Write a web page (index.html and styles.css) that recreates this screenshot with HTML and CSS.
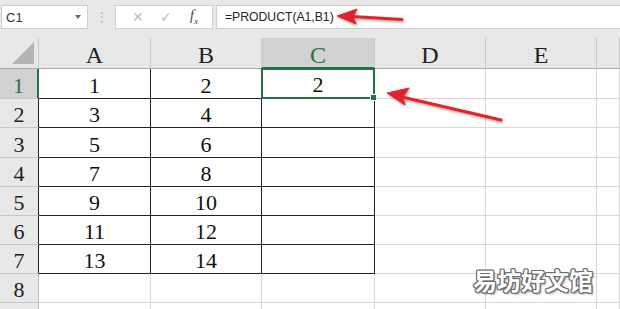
FILE: index.html
```html
<!DOCTYPE html>
<html lang="zh">
<head>
  <meta charset="UTF-8">
  <title>PRODUCT</title>
  <link rel="stylesheet" href="styles.css">
</head>
<body>

<div class="toolbar">
  <div class="namebox">
    <span>C1</span>
    <span class="drop"></span>
  </div>
  <div class="grip">⋮</div>
  <div class="buttons">
    <span class="btn">✕</span>
    <span class="btn">✓</span>
    <span class="btn fx"><i>f</i><sub>x</sub></span>
  </div>
  <div class="formula">=PRODUCT(A1,B1)</div>
</div>

<div class="sheet">
  <div class="hd corner"><span class="tri"></span></div>
  <div class="hd">A</div>
  <div class="hd">B</div>
  <div class="hd active">C</div>
  <div class="hd">D</div>
  <div class="hd">E</div>
  <div class="hd"></div>

  <div class="rh sel">1</div>
  <div class="c t">1</div><div class="c t">2</div><div class="c t cur">2<span class="handle"></span></div><div class="c"></div><div class="c"></div><div class="c"></div>

  <div class="rh tl">2</div>
  <div class="c t">3</div><div class="c t">4</div><div class="c t"></div><div class="c"></div><div class="c"></div><div class="c"></div>

  <div class="rh tl">3</div>
  <div class="c t">5</div><div class="c t">6</div><div class="c t"></div><div class="c"></div><div class="c"></div><div class="c"></div>

  <div class="rh tl">4</div>
  <div class="c t">7</div><div class="c t">8</div><div class="c t"></div><div class="c"></div><div class="c"></div><div class="c"></div>

  <div class="rh tl">5</div>
  <div class="c t">9</div><div class="c t">10</div><div class="c t"></div><div class="c"></div><div class="c"></div><div class="c"></div>

  <div class="rh tl">6</div>
  <div class="c t">11</div><div class="c t">12</div><div class="c t"></div><div class="c"></div><div class="c"></div><div class="c"></div>

  <div class="rh tl">7</div>
  <div class="c t">13</div><div class="c t">14</div><div class="c t"></div><div class="c"></div><div class="c"></div><div class="c"></div>

  <div class="rh">8</div>
  <div class="c"></div><div class="c"></div><div class="c"></div><div class="c"></div><div class="c"></div><div class="c"></div>

  <div class="rh"></div>
  <div class="c"></div><div class="c"></div><div class="c"></div><div class="c"></div><div class="c"></div><div class="c"></div>
</div>

<svg class="arrows" width="620" height="309" viewBox="0 0 620 309">
  <defs>
    <filter id="sh" x="-20%" y="-50%" width="140%" height="200%">
      <feDropShadow dx="1" dy="1.5" stdDeviation="1.2" flood-color="#000" flood-opacity="0.35"/>
    </filter>
  </defs>
  <g fill="#e5242a" stroke="#e5242a" filter="url(#sh)">
    <line x1="402" y1="19.5" x2="352" y2="16.5" stroke-width="3" stroke-linecap="round"/>
    <polygon points="337,16 357,9 353,16.5 356,24" stroke-width="1" stroke-linejoin="round"/>
    <line x1="501" y1="120" x2="402" y2="97" stroke-width="3" stroke-linecap="round"/>
    <polygon points="387,93 409,88 403,97 405,105" stroke-width="1" stroke-linejoin="round"/>
  </g>
</svg>

<div class="mark">易坊好文馆</div>

</body>
</html>
```

FILE: styles.css
```css
body {
  margin: 0;
  width: 620px;
  height: 309px;
  overflow: hidden;
  background: #fff;
  position: relative;
  font-family: "Liberation Sans", Arial, sans-serif;
}
.toolbar {
  height: 38px;
  background: #e8e8e8;
  display: flex;
  align-items: flex-start;
  padding-top: 5px;
  box-sizing: border-box;
}
.namebox {
  width: 87px;
  height: 24px;
  margin-left: 1px;
  background: #fff;
  border: 1px solid #cfcfcf;
  box-sizing: border-box;
  display: flex;
  align-items: center;
  justify-content: space-between;
  padding: 0 6px 0 4px;
  font-size: 13px;
  color: #333;
}
.drop {
  width: 0;
  height: 0;
  border-left: 3.5px solid transparent;
  border-right: 3.5px solid transparent;
  border-top: 4px solid #666;
}
.grip {
  width: 27px;
  text-align: center;
  color: #b5b5b5;
  font-size: 14px;
  line-height: 24px;
}
.buttons {
  width: 98px;
  height: 24px;
  background: #fff;
  border: 1px solid #cfcfcf;
  box-sizing: border-box;
  display: flex;
  align-items: center;
  justify-content: space-around;
  padding: 0 4px 0 8px;
}
.btn {
  color: #bdbdbd;
  font-size: 14px;
  width: 20px;
  text-align: center;
}
.fx {
  color: #444;
  font-family: "Liberation Serif", serif;
  font-size: 14px;
}
.fx sub {
  font-size: 9px;
  font-style: italic;
}
.formula {
  flex: 1;
  height: 24px;
  margin-left: 3px;
  background: #fff;
  border: 1px solid #cfcfcf;
  border-right: none;
  box-sizing: border-box;
  font-size: 12.2px;
  line-height: 22px;
  padding-left: 8px;
  color: #222;
}
.sheet {
  display: grid;
  grid-template-columns: 39px 112px 111px 113px 111px 111px 1fr;
  grid-template-rows: 31px 30px 29px 30px 29px 29px 29px 29px 29px 29px;
  font-family: "Liberation Serif", "Times New Roman", serif;
  font-size: 22px;
  color: #111;
}
.hd, .rh, .c {
  box-sizing: border-box;
  border-right: 1px solid #d8d8d8;
  border-bottom: 1px solid #d8d8d8;
  display: flex;
  align-items: flex-end;
  justify-content: center;
  line-height: 1;
  padding-bottom: 1px;
}
.hd {
  background: #e8e8e8;
  border-right-color: #c8c8c8;
  border-bottom-color: #a9a9a9;
  font-size: 24px;
  color: #222;
  padding-bottom: 1px;
}
.hd.corner {
  position: relative;
}
.tri {
  position: absolute;
  right: 4px;
  bottom: 4px;
  width: 0;
  height: 0;
  border-left: 22px solid transparent;
  border-bottom: 22px solid #b4b4b4;
}
.hd.active {
  background: #d2d2d2;
  color: #2b6e45;
  border-bottom: 2px solid #217346;
  padding-bottom: 0;
}
.rh {
  background: #e8e8e8;
  border-right-color: #bdbdbd;
  border-bottom-color: #c8c8c8;
  color: #222;
}
.rh.tl {
  border-right-color: #222;
}
.rh.sel {
  background: #d2d2d2;
  color: #2b6e45;
  border-right: 2px solid #217346;
}
.c.t {
  border-right-color: #222;
  border-bottom-color: #222;
}
.c.cur {
  position: relative;
  border: 2px solid #217346;
  margin-left: -1px;
  margin-top: -1px;
}
.handle {
  position: absolute;
  right: -4px;
  bottom: -4px;
  width: 5px;
  height: 5px;
  background: #217346;
  border: 1px solid #fff;
}
.arrows {
  position: absolute;
  left: 0;
  top: 0;
}
.mark {
  position: absolute;
  left: 473px;
  top: 262px;
  font-family: "Noto Sans CJK SC", sans-serif;
  font-size: 24px;
  font-weight: 700;
  color: #fff;
  text-shadow:
    1px 0 #6a6a6a, -1px 0 #6a6a6a, 0 1px #6a6a6a, 0 -1px #6a6a6a,
    1px 1px #6a6a6a, -1px -1px #6a6a6a, 1px -1px #6a6a6a, -1px 1px #6a6a6a,
    2px 2px 2px rgba(0, 0, 0, 0.3);
}
```
